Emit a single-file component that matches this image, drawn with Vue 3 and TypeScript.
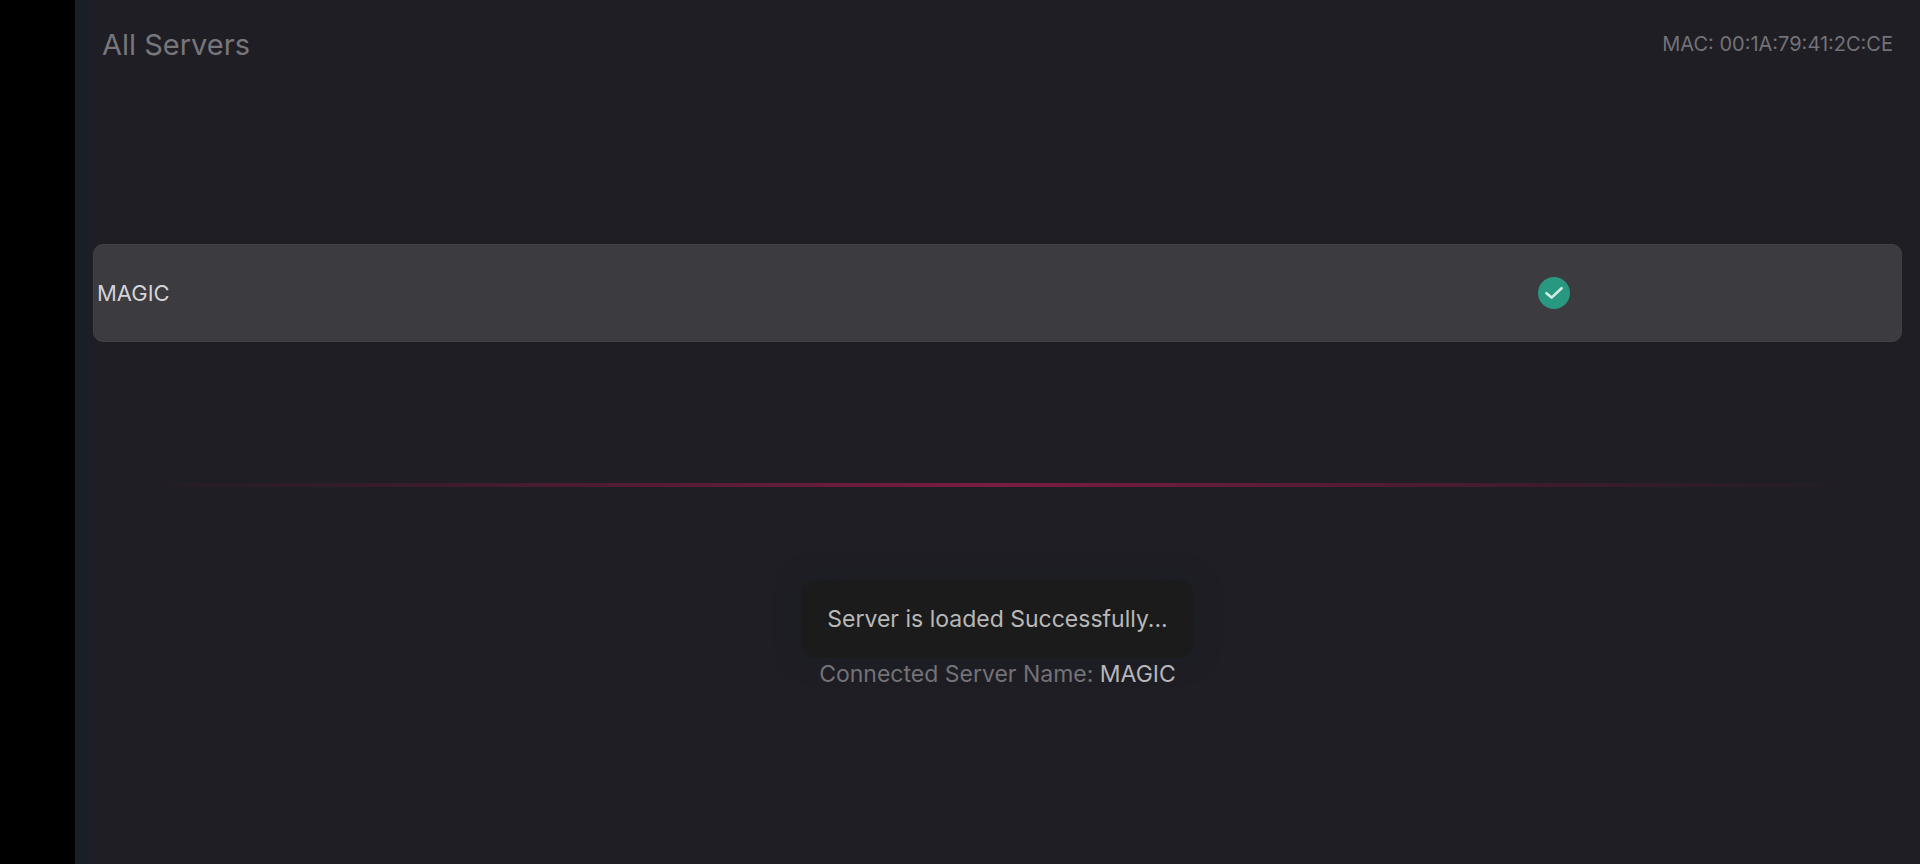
<script setup lang="ts">
import { ref } from 'vue'

interface Server {
  name: string
  connected: boolean
}

const macAddress = '00:1A:79:41:2C:CE'
const servers = ref<Server[]>([{ name: 'MAGIC', connected: true }])
const selected = ref<Server>(servers.value[0])
</script>

<template>
  <main class="screen">
    <header class="top">
      <h1 class="title">All Servers</h1>
      <p class="mac">MAC: {{ macAddress }}</p>
    </header>

    <section class="servers">
      <button
        v-for="server in servers"
        :key="server.name"
        class="server"
        type="button"
        @click="selected = server"
      >
        <span class="server-name">{{ server.name }}</span>
        <svg v-if="server.connected" class="check" viewBox="0 0 32 32" aria-hidden="true">
          <circle cx="16" cy="16" r="16" fill="#289980" />
          <path
            d="M8.5 16.2 L13.6 20.6 L23.6 11.2"
            fill="none"
            stroke="#d3ebe5"
            stroke-width="2.6"
            stroke-linecap="round"
            stroke-linejoin="round"
          />
        </svg>
      </button>
    </section>

    <div class="divider"></div>

    <section class="status">
      <p class="toast" role="status">Server is loaded Successfully...</p>
      <p class="connected">
        Connected Server Name: <span class="connected-name">{{ selected.name }}</span>
      </p>
    </section>
  </main>
</template>

<style>
body {
  background: #1f1e24;
}
</style>

<style scoped>
.screen {
  box-sizing: border-box;
  display: flex;
  flex-direction: column;
  min-height: 100vh;
  padding: 0 18px;
  border-left: 75px solid #000;
  background: linear-gradient(to right, #1a1f27 0, #1a1f27 12px, #1f1e24 24px);
  font-family: Inter, "Liberation Sans", sans-serif;
}

.top {
  display: flex;
  align-items: center;
  justify-content: space-between;
  height: 88px;
  padding: 0 9px;
}

.title,
.mac,
.toast,
.connected {
  margin: 0;
  font-weight: 400;
}

.title {
  color: #77767b;
  font-size: 29px;
}

.mac {
  color: #737278;
  font-size: 20px;
}

.servers {
  display: flex;
  flex-direction: column;
  justify-content: center;
  min-height: 98px;
  padding: 156px 0 141px;
}

.server {
  box-sizing: border-box;
  display: grid;
  grid-template-columns: 618fr 382fr;
  align-items: center;
  width: 100%;
  height: 98px;
  padding: 0 3px;
  border: 1px solid #414145;
  border-radius: 10px;
  background: #3c3b3f;
  color: #d3d2d6;
  font: inherit;
  font-size: 22px;
  text-align: left;
  cursor: pointer;
}

.check {
  justify-self: center;
  width: 32px;
  height: 32px;
}

.divider {
  height: 4px;
  background: linear-gradient(to right, transparent 2%, #3f1b2e 20%, #7a1c45 50%, #3f1b2e 80%, transparent 98%);
}

.status {
  display: flex;
  flex-direction: column;
  align-items: center;
  padding: 93px 0;
}

.toast {
  padding: 24px 26px;
  border-radius: 16px;
  background: #1b1b1b;
  box-shadow: 0 0 24px #1a1f27;
  color: #b8b8b8;
  font-size: 23px;
  line-height: 30px;
}

.connected {
  color: #737278;
  font-size: 23px;
  line-height: 32px;
}

.connected-name {
  color: #b7b6ba;
}
</style>
